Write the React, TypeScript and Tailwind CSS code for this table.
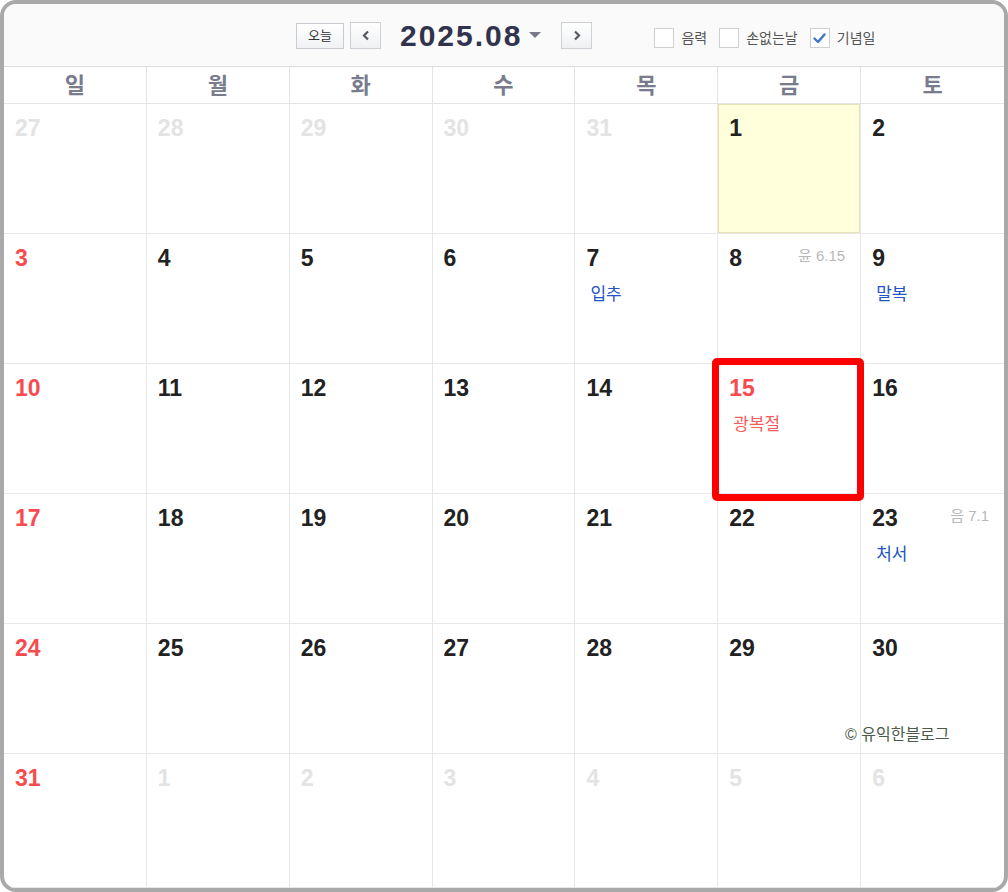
import React from 'react';

type Day = {
  n: number;
  muted?: boolean;
  sun?: boolean;
  today?: boolean;
  red?: boolean;
  event?: string;
  holiday?: boolean;
  lunar?: string;
};

const WEEKDAYS = ['일', '월', '화', '수', '목', '금', '토'];

// 2025년 8월 달력 데이터
const WEEKS: Day[][] = [
  [
    { n: 27, muted: true }, { n: 28, muted: true }, { n: 29, muted: true }, { n: 30, muted: true },
    { n: 31, muted: true }, { n: 1, today: true }, { n: 2 },
  ],
  [
    { n: 3, sun: true }, { n: 4 }, { n: 5 }, { n: 6 }, { n: 7, event: '입추' },
    { n: 8, lunar: '윤 6.15' }, { n: 9, event: '말복' },
  ],
  [
    { n: 10, sun: true }, { n: 11 }, { n: 12 }, { n: 13 }, { n: 14 },
    { n: 15, red: true, event: '광복절', holiday: true }, { n: 16 },
  ],
  [
    { n: 17, sun: true }, { n: 18 }, { n: 19 }, { n: 20 }, { n: 21 }, { n: 22 },
    { n: 23, lunar: '음 7.1', event: '처서' },
  ],
  [
    { n: 24, sun: true }, { n: 25 }, { n: 26 }, { n: 27 }, { n: 28 }, { n: 29 }, { n: 30 },
  ],
  [
    { n: 31, sun: true }, { n: 1, muted: true }, { n: 2, muted: true }, { n: 3, muted: true },
    { n: 4, muted: true }, { n: 5, muted: true }, { n: 6, muted: true },
  ],
];

const Checkbox: React.FC<{ label: string; checked?: boolean }> = ({ label, checked }) => (
  <label className="flex items-center gap-[7px]">
    <span className="w-[20px] h-[20px] border border-[#cfcfcf] bg-white flex items-center justify-center">
      {checked && (
        <svg width="13" height="11" viewBox="0 0 13 11">
          <path d="M1.5 5.5 L5 9 L11.5 1.5" fill="none" stroke="#3d78c4" strokeWidth="2.4" strokeLinecap="round" strokeLinejoin="round" />
        </svg>
      )}
    </span>
    <span className="text-[14px] text-[#555]">{label}</span>
  </label>
);

const NavButton: React.FC<{ dir: 'left' | 'right' }> = ({ dir }) => (
  <button className="w-[31px] h-[27px] border border-[#cdd0d4] bg-gradient-to-b from-white to-[#eef0f2] flex items-center justify-center">
    <svg width="8" height="11" viewBox="0 0 8 11">
      <path
        d={dir === 'left' ? 'M6 1.5 L2 5.5 L6 9.5' : 'M2 1.5 L6 5.5 L2 9.5'}
        fill="none"
        stroke="#55585f"
        strokeWidth="2.2"
      />
    </svg>
  </button>
);

const App: React.FC = () => {
  return (
    <div
      className="relative w-[1008px] h-[892px] border-4 border-[#a9a9a9] rounded-[16px] overflow-hidden bg-white flex flex-col"
      style={{ fontFamily: '"Liberation Sans", "Noto Sans CJK KR", sans-serif' }}
    >
      {/* 상단 헤더 */}
      <header className="h-[63px] bg-[#fafafa] border-b border-[#dcdcdc] flex items-center pl-[292px] pt-[1px]">
        <button className="w-[48px] h-[26px] border border-[#c8cbd0] bg-gradient-to-b from-white to-[#f1f2f4] text-[13px] text-[#333] flex items-center justify-center">
          오늘
        </button>
        <div className="ml-[6px]">
          <NavButton dir="left" />
        </div>
        <h1 className="ml-[19px] text-[30px] font-bold tracking-[2px] text-[#31334d] leading-none">2025.08</h1>
        <svg className="ml-[7px]" width="12" height="7" viewBox="0 0 12 7">
          <path d="M0 0 L12 0 L6 6 Z" fill="#77798a" />
        </svg>
        <div className="ml-[20px]">
          <NavButton dir="right" />
        </div>
        <div className="ml-[62px] flex items-center gap-[12px] mt-[5px]">
          <Checkbox label="음력" />
          <Checkbox label="손없는날" />
          <Checkbox label="기념일" checked />
        </div>
      </header>

      {/* 요일 */}
      <div className="grid grid-cols-7 h-[37px] border-b border-[#e4e4e4]">
        {WEEKDAYS.map((w, i) => (
          <div
            key={w}
            className={`flex items-center justify-center text-[22px] font-bold text-[#787c8d] ${i < 6 ? 'border-r border-[#e4e4e4]' : ''}`}
          >
            {w}
          </div>
        ))}
      </div>

      {/* 날짜 */}
      <div className="grid grid-cols-7 grid-rows-[130px_130px_130px_130px_130px_1fr] flex-1">
        {WEEKS.flat().map((d, i) => {
          const col = i % 7;
          const numColor = d.muted
            ? 'text-[#e3e3e3]'
            : d.sun || d.red
              ? 'text-[#f64c50]'
              : 'text-[#222]';
          return (
            <div
              key={i}
              className={`relative pl-[11px] pt-[11px] pr-[15px] border-b border-[#e8e8e8] ${col < 6 ? 'border-r' : ''} ${d.today ? 'bg-[#ffffdc] shadow-[inset_0_0_0_1px_#e4e2b6]' : ''}`}
            >
              <div className="flex items-start justify-between">
                <span className={`text-[23px] leading-[26px] font-bold ${numColor}`}>{d.n}</span>
                {d.lunar && <span className="text-[15px] leading-[26px] text-[#b8b8b8] mt-[-2px]">{d.lunar}</span>}
              </div>
              {d.event && (
                <p className={`mt-[14px] pl-[4px] text-[17px] leading-[20px] ${d.holiday ? 'text-[#f65a5a]' : 'text-[#2453c4]'}`}>
                  {d.event}
                </p>
              )}
            </div>
          );
        })}
      </div>

      {/* 강조 표시 */}
      <div className="absolute left-[708px] top-[354px] w-[152px] h-[143px] border-[7px] border-[#ff0000] rounded-[5px]" />

      {/* 워터마크 */}
      <div className="absolute left-[841px] top-[719px] text-[16px] text-[#4b5a4b]">© 유익한블로그</div>
    </div>
  );
};

export default App;
